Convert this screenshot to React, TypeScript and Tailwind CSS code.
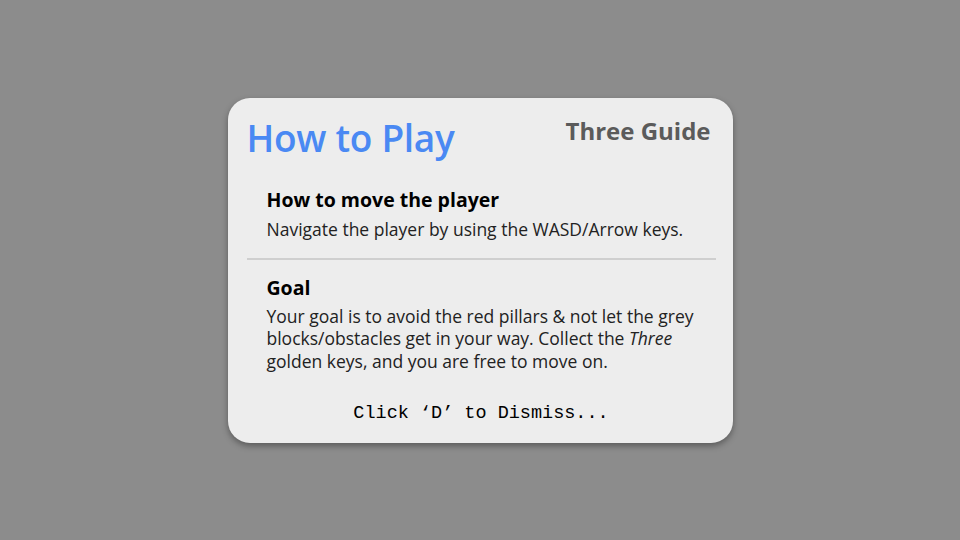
export default function App() {
  return (
    <div className="min-h-screen w-full bg-[#8c8c8c] flex items-center justify-center font-['Open_Sans',sans-serif]">
      <div className="w-[505px] h-[345px] bg-[#ededed] rounded-[22px] shadow-[0_3px_6px_rgba(0,0,0,0.35)] pt-[16px] pl-[19px] pr-[17px] flex flex-col">
        <div className="flex items-start justify-between">
          <h1 className="text-[37px] leading-[48px] font-semibold text-[#4a89f3] tracking-[-0.3px]">
            How to Play
          </h1>
          <span className="text-[24px] leading-[32px] font-bold text-[#5b5b5b] mr-[5px] mt-[1px]">
            Three Guide
          </span>
        </div>

        <div className="pl-[20px] mt-[25px]">
          <h2 className="text-[19.5px] leading-[26px] font-bold text-black">How to move the player</h2>
          <p className="text-[17.5px] leading-[23px] text-[#222] mt-[5px]">
            Navigate the player by using the WASD/Arrow keys.
          </p>
        </div>

        <div className="h-[2px] bg-[#cfcfcf] mt-[17px]" />

        <div className="pl-[20px] pr-[12px] mt-[15px]">
          <h2 className="text-[19.5px] leading-[26px] font-bold text-black">Goal</h2>
          <p className="text-[17.5px] leading-[22.5px] text-[#222] mt-[4px]">
            Your goal is to avoid the red pillars &amp; not let the grey blocks/obstacles get in your way. Collect the{" "}
            <em>Three</em> golden keys, and you are free to move on.
          </p>
        </div>

        <div className="mt-[30px] text-center font-['Liberation_Mono',monospace] text-[18.5px] leading-[24px] text-black">
          Click ‘D’ to Dismiss...
        </div>
      </div>
    </div>
  );
}
